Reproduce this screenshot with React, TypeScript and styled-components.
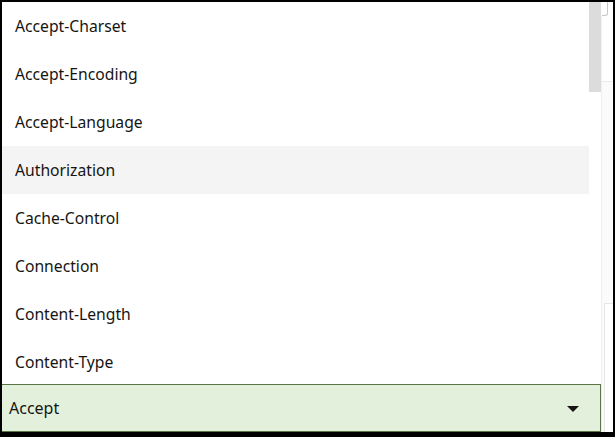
import React from 'react';
import styled, { createGlobalStyle } from 'styled-components';

const GlobalStyle = createGlobalStyle`
  html, body {
    margin: 0;
    padding: 0;
    background: #ffffff;
  }
  body {
    font-family: 'Noto Sans', 'Liberation Sans', sans-serif;
  }
`;

const Frame = styled.div`
  box-sizing: border-box;
  width: 615px;
  height: 437px;
  border-style: solid;
  border-color: #000000;
  border-width: 2px 2px 5px 2px;
  display: flex;
  background: #ffffff;
  overflow: hidden;
`;

const Dropdown = styled.div`
  width: 599px;
  display: flex;
  flex-direction: column;
`;

const ListArea = styled.div`
  height: 382px;
  display: flex;
  overflow: hidden;
`;

const Options = styled.ul`
  flex: 1;
  margin: 0;
  padding: 0;
  list-style: none;
`;

const Option = styled.li<{ $active?: boolean }>`
  box-sizing: border-box;
  height: 48px;
  display: flex;
  align-items: center;
  padding: 0 0 1px 13px;
  font-size: 15.7px;
  color: #161513;
  background: ${(p) => (p.$active ? '#f4f4f4' : '#ffffff')};
`;

const Track = styled.div`
  width: 12px;
  background: #ffffff;
`;

const Thumb = styled.div`
  height: 90px;
  background: #dcdcdc;
`;

const Field = styled.div`
  box-sizing: border-box;
  height: 48px;
  margin-left: -1px;
  border: 1px solid #5b7447;
  background: #e3f1dc;
  display: flex;
  align-items: center;
  justify-content: space-between;
  padding: 0 21px 0 7px;
  font-size: 16px;
  color: #161513;
`;

const Arrow = styled.span`
  width: 0;
  height: 0;
  border-left: 6px solid transparent;
  border-right: 6px solid transparent;
  border-top: 6px solid #161513;
  margin-top: 1px;
`;

const Behind = styled.div`
  flex: 1;
  display: flex;
  flex-direction: column;
  background: #ffffff;
`;

const BehindTop = styled.div`
  height: 13px;
  margin-right: 5px;
  margin-left: 1px;
  border-right: 1px solid #c8c8c8;
  border-bottom: 1px solid #c8c8c8;
  border-bottom-right-radius: 3px;
`;

const BehindGap = styled.div`
  height: 65px;
  border-left: 1px solid #f2f2f2;
`;

const BehindPanel = styled.div`
  flex: 1;
  border-top: 1px solid #ececec;
  border-left: 1px solid #efefef;
  background: #fbfbfa;
  display: flex;
  flex-direction: column;
`;

const BehindInner = styled.div`
  margin-top: 221px;
  flex: 1;
  border-top: 1px solid #e6e6e6;
  border-left: 1px solid #e6e6e6;
  margin-left: 2px;
  background: #ffffff;
`;

const options = [
  'Accept-Charset',
  'Accept-Encoding',
  'Accept-Language',
  'Authorization',
  'Cache-Control',
  'Connection',
  'Content-Length',
  'Content-Type',
];

export default function App() {
  return (
    <>
      <GlobalStyle />
      <Frame>
        <Dropdown>
          <ListArea>
            <Options>
              {options.map((o) => (
                <Option key={o} $active={o === 'Authorization'}>
                  {o}
                </Option>
              ))}
            </Options>
            <Track>
              <Thumb />
            </Track>
          </ListArea>
          <Field>
            <span>Accept</span>
            <Arrow />
          </Field>
        </Dropdown>
        <Behind>
          <BehindTop />
          <BehindGap />
          <BehindPanel>
            <BehindInner />
          </BehindPanel>
        </Behind>
      </Frame>
    </>
  );
}
